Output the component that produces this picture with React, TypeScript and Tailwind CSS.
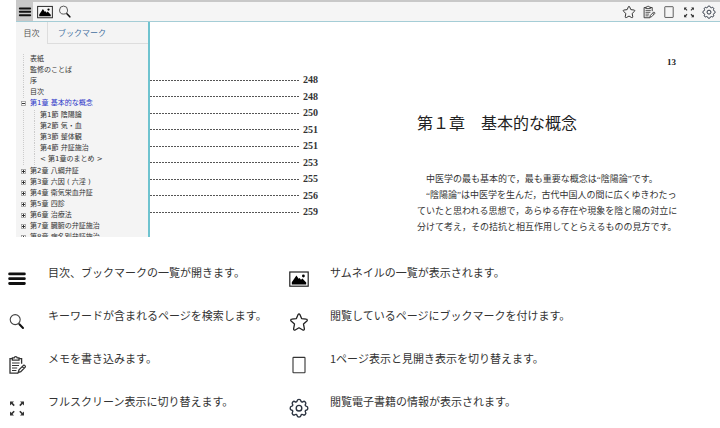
import { ReactNode } from 'react';

interface IconProps {
  className?: string;
}

function MenuIcon({ className }: IconProps) {
  return (
    <svg className={className} viewBox="0 0 20 20" fill="none" stroke="#111" strokeWidth="2.8">
      <path strokeLinecap="round" d="M2.6 4.9h14.8M2.6 9.7h14.8M2.6 14.5h14.8" />
    </svg>
  );
}

function ImageIcon({ className }: IconProps) {
  return (
    <svg className={className} viewBox="0 0 20 20" fill="none" stroke="#222" strokeWidth="1.2">
      <rect x="0.8" y="3" width="18.4" height="14.2" />
      <path fill="#000" stroke="none" d="M2.8 15.4v-2.2l4.6-6.8 2.2 3.4 1-.8 1.4 1.8 1.4-1.4 3.8 4v2z" />
      <circle cx="14.4" cy="7" r="1.4" fill="#000" stroke="none" />
    </svg>
  );
}

function SearchIcon({ className }: IconProps) {
  return (
    <svg className={className} viewBox="0 0 20 20" fill="none" stroke="#444" strokeWidth="1.1">
      <circle cx="8.2" cy="7.6" r="5" />
      <path stroke="#111" strokeWidth="2" strokeLinecap="round" d="M12.4 12.2l3.6 3.8" />
    </svg>
  );
}

function StarIcon({ className }: IconProps) {
  return (
    <svg className={className} viewBox="0 0 20 20" fill="none" stroke="#222" strokeWidth="1.3">
      <path strokeLinejoin="round" d="M10 1.8c.5 0 .7.4.9.8l1.7 4 4.6.6c1.1.1 1.4 1.1.7 1.8l-3.4 3.1.9 4.8c.1 1-.8 1.5-1.6 1.1L10 15.8 6.2 18c-.8.4-1.7-.1-1.6-1.1l.9-4.8L2.1 9c-.7-.7-.4-1.7.7-1.8l4.6-.6 1.7-4c.2-.4.4-.8.9-.8z" />
    </svg>
  );
}

function MemoIcon({ className }: IconProps) {
  return (
    <svg className={className} viewBox="0 0 20 20" fill="none" stroke="#333" strokeWidth="1.3">
      <path d="M5.4 3.6H3v14.6h8.4M12 3.6h2.6v5.2" />
      <path d="M5.4 5.2V2.9h1.8c.2-1.6 2.8-1.6 3 0H12v2.3z" />
      <path strokeWidth="1.1" d="M5 8h7.6M5 10.5h7M5 13h5.2M5 15.5h4.4" />
      <path d="M11.2 17.6l.8-2.8 4.4-4.4c1-.7 2.5.7 1.8 1.8l-4.4 4.5zM15.2 11.6l1.9 1.9" />
    </svg>
  );
}

function PageIcon({ className }: IconProps) {
  return (
    <svg className={className} viewBox="0 0 20 20" fill="none" stroke="#333" strokeWidth="1.1">
      <rect x="4" y="2.4" width="12" height="15.4" rx="0.6" />
    </svg>
  );
}

function ExpandIcon({ className }: IconProps) {
  return (
    <svg className={className} viewBox="0 0 20 20" fill="none" stroke="#333" strokeWidth="1.6">
      <path d="M4 4.4l3.2 3.2M16 4.4l-3.2 3.2M4 16.4l3.2-3.2M16 16.4l-3.2-3.2" />
      <path fill="#333" stroke="none" d="M3 3.4h4L3 7.4zM17 3.4h-4l4 4zM3 17.4h4l-4-4zM17 17.4h-4l4-4z" />
    </svg>
  );
}

function GearIcon({ className }: IconProps) {
  return (
    <svg className={className} viewBox="0 0 20 20" fill="none" stroke="#2b3340" strokeWidth="1.4">
      <path
        strokeLinejoin="round"
        d="M8.2 2.6C8.5 1 11.5 1 11.8 2.6c.2 1.3 1.3 1.8 2.4 1 1.3-.9 3.3 1.1 2.4 2.4-.8 1.1-.3 2.2 1 2.4 1.6.3 1.6 3.3 0 3.6-1.3.2-1.8 1.3-1 2.4.9 1.3-1.1 3.3-2.4 2.4-1.1-.8-2.2-.3-2.4 1-.3 1.6-3.3 1.6-3.6 0-.2-1.3-1.3-1.8-2.4-1-1.3.9-3.3-1.1-2.4-2.4.8-1.1.3-2.2-1-2.4-1.6-.3-1.6-3.3 0-3.6 1.3-.2 1.8-1.3 1-2.4-.9-1.3 1.1-3.3 2.4-2.4 1.1.8 2.2.3 2.4-1z"
      />
      <circle cx="10" cy="10.2" r="2.8" />
    </svg>
  );
}

const chapters = [
  { title: '第2章 八綱弁証' },
  { title: '第3章 六因 ( 六淫 )' },
  { title: '第4章 衛気栄血弁証' },
  { title: '第5章 四診' },
  { title: '第6章 治療法' },
  { title: '第7章 臓腑の弁証施治' },
  { title: '第8章 病名別弁証施治' },
];

const sections = ['第1節 陰陽論', '第2節 気・血', '第3節 整体観', '第4節 弁証施治', '< 第1章のまとめ >'];

const pageNumbers = [248, 248, 250, 251, 251, 253, 255, 256, 259];

const legend: { icon: ReactNode; text: string }[] = [
  { icon: <MenuIcon className="size-5" />, text: '目次、ブックマークの一覧が開きます。' },
  { icon: <ImageIcon className="size-5" />, text: 'サムネイルの一覧が表示されます。' },
  { icon: <SearchIcon className="size-5" />, text: 'キーワードが含まれるページを検索します。' },
  { icon: <StarIcon className="size-5" />, text: '閲覧しているページにブックマークを付けます。' },
  { icon: <MemoIcon className="size-5" />, text: 'メモを書き込みます。' },
  { icon: <PageIcon className="size-5" />, text: '1ページ表示と見開き表示を切り替えます。' },
  { icon: <ExpandIcon className="size-5" />, text: 'フルスクリーン表示に切り替えます。' },
  { icon: <GearIcon className="size-5" />, text: '閲覧電子書籍の情報が表示されます。' },
];

function Toggle({ open, label }: { open?: boolean; label: string }) {
  return (
    <button type="button" aria-label={label} aria-expanded={!!open} className="mr-1 shrink-0">
      <svg className="size-[5px]" viewBox="0 0 5 5" fill="none">
        <rect x="0.5" y="0.5" width="4" height="4" fill="#fff" stroke="#999" strokeWidth="0.8" />
        <path d={open ? 'M1 2.5h3' : 'M1 2.5h3M2.5 1v3'} stroke="#222" strokeWidth="0.9" />
      </svg>
    </button>
  );
}

function Toolbar() {
  return (
    <div className="flex h-[22px] items-center border-t-2 border-b border-t-[#c8c8c8] border-b-[#a5cdd6] bg-[#f5f5f5]">
      <button type="button" aria-label="目次" className="flex h-full w-[17px] items-center justify-center bg-[#c9c9c9]">
        <MenuIcon className="size-[14px]" />
      </button>
      <button type="button" aria-label="サムネイル" className="ml-1">
        <ImageIcon className="size-4" />
      </button>
      <button type="button" aria-label="検索" className="ml-1">
        <SearchIcon className="size-4" />
      </button>
      <div className="ml-auto flex items-center gap-[6px] pr-1">
        <button type="button" aria-label="ブックマーク">
          <StarIcon className="size-[14px]" />
        </button>
        <button type="button" aria-label="メモ">
          <MemoIcon className="size-[14px]" />
        </button>
        <button type="button" aria-label="ページ表示">
          <PageIcon className="size-[14px]" />
        </button>
        <button type="button" aria-label="フルスクリーン">
          <ExpandIcon className="size-[14px]" />
        </button>
        <button type="button" aria-label="情報">
          <GearIcon className="size-[14px]" />
        </button>
      </div>
    </div>
  );
}

function Sidebar() {
  return (
    <aside className="w-[134px] shrink-0 overflow-hidden border-r-2 border-[#6fc3cf] bg-[#f4f4f4]">
      <div className="flex h-[22px] text-[8px]">
        <button type="button" className="w-8 border-r border-[#ddd] text-[#555]">
          目次
        </button>
        <button type="button" className="flex-1 border-b border-[#ddd] pl-[10px] text-left text-[#44709f]">
          ブックマーク
        </button>
      </div>
      <ul className="pt-[10px] pl-[5px] font-['DejaVu_Sans','Noto_Sans_CJK_JP',sans-serif] text-[7px] leading-[11px] whitespace-nowrap text-[#333]">
        {['表紙', '監修のことば', '序', '目次'].map((title) => (
          <li key={title} className="ml-[2px] border-l border-dotted border-[#ccc] pl-[6px]">
            {title}
          </li>
        ))}
        <li>
          <div className="flex items-center text-[#2a35c8]">
            <Toggle open label="第1章を閉じる" />
            第1章 基本的な概念
          </div>
          <ul className="my-px ml-[2px] border-l border-dotted border-[#ccc] pl-[10px]">
            {sections.map((title) => (
              <li key={title} className="border-l border-dotted border-[#ccc] pl-[5px]">
                {title}
              </li>
            ))}
          </ul>
        </li>
        {chapters.map(({ title }) => (
          <li key={title} className="flex items-center">
            <Toggle label={`${title}を開く`} />
            {title}
          </li>
        ))}
      </ul>
    </aside>
  );
}

function Pages() {
  return (
    <>
      <div className="min-w-0 flex-1 pt-[50px] pr-[50px]">
        <ol className="flex h-[148px] flex-col justify-between font-['Liberation_Serif','Noto_Sans_CJK_JP',serif] text-[10px] leading-4 font-semibold text-[#333]">
          {pageNumbers.map((page, index) => (
            <li key={index} className="flex items-center gap-1">
              <span className="h-px flex-1 bg-[repeating-linear-gradient(90deg,#555_0_2px,#fff_2px_3px)]" />
              {page}
            </li>
          ))}
        </ol>
      </div>
      <div className="w-1/2 shrink-0 pl-[49px] font-['Liberation_Serif','Noto_Sans_CJK_JP',serif] whitespace-nowrap text-[#222]">
        <div className="pt-8 pr-11 text-right text-[9px] leading-4 font-semibold">13</div>
        <h1 className="pt-[42px] text-[16px] leading-6">第１章　基本的な概念</h1>
        <div className="pt-[35px] text-[9px] leading-4 text-[#333]">
          <p className="indent-[9px]">中医学の最も基本的で，最も重要な概念は“陰陽論”です。</p>
          <p className="indent-[9px]">“陰陽論”は中医学を生んだ，古代中国人の間に広くゆきわたっ</p>
          <p>ていたと思われる思想で，あらゆる存在や現象を陰と陽の対立に</p>
          <p>分けて考え，その拮抗と相互作用してとらえるものの見方です。</p>
        </div>
      </div>
    </>
  );
}

export default function App() {
  return (
    <main lang="ja" className="bg-white font-['Noto_Sans_CJK_JP',sans-serif] text-[#333]">
      <section className="pl-4">
        <Toolbar />
        <div className="flex h-[215px] overflow-hidden">
          <Sidebar />
          <Pages />
        </div>
      </section>

      <ul className="grid grid-cols-[282px_1fr] pt-[25px]">
        {legend.map(({ icon, text }) => (
          <li key={text} className="flex h-[43px] items-start pl-[7px]">
            <span className="mt-[7px] mr-[21px] shrink-0">{icon}</span>
            <span className="text-[11px] leading-5 whitespace-nowrap">{text}</span>
          </li>
        ))}
      </ul>
    </main>
  );
}
